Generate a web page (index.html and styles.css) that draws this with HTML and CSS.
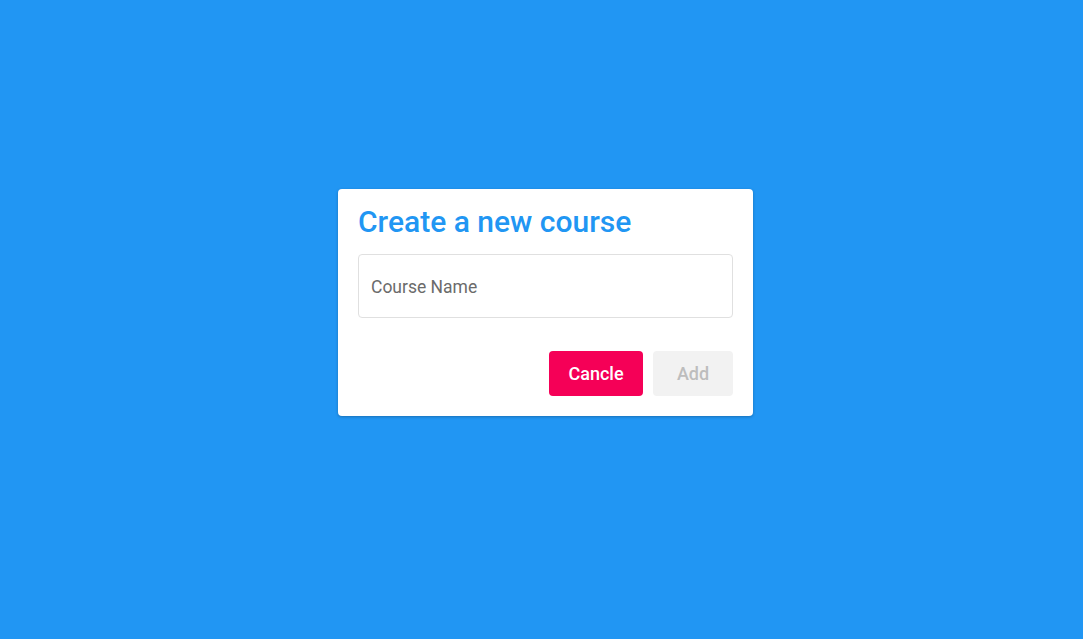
FILE: index.html
```html
<!DOCTYPE html>
<html lang="en">
<head>
<meta charset="utf-8">
<title>Create a new course</title>
<link rel="stylesheet" href="styles.css">
</head>
<body>
<div class="page">
  <div class="dialog">
    <h1 class="dialog-title">Create a new course</h1>
    <input class="course-input" type="text" placeholder="Course Name">
    <div class="actions">
      <button class="btn btn-cancel" type="button">Cancle</button>
      <button class="btn btn-add" type="button" disabled>Add</button>
    </div>
  </div>
</div>
</body>
</html>
```

FILE: styles.css
```css
html, body {
  margin: 0;
  padding: 0;
  height: 100%;
}
body {
  background: #2196f3;
  font-family: Roboto, "Liberation Sans", sans-serif;
}
.page {
  height: 100%;
  display: flex;
  justify-content: center;
  align-items: center;
}
.dialog {
  width: 415px;
  box-sizing: border-box;
  background: #fff;
  border-radius: 4px;
  padding: 14px 20px 20px;
  display: flex;
  flex-direction: column;
  box-shadow: 0 1px 3px rgba(0,0,0,0.25);
  margin: -35px 0 0 8px;
}
.dialog-title {
  margin: 0;
  font-size: 30px;
  font-weight: 500;
  color: #2196f3;
  line-height: 37px;
}
.course-input {
  margin-top: 14px;
  height: 64px;
  box-sizing: border-box;
  border: 1px solid #e0e0e0;
  border-radius: 4px;
  padding: 2px 12px 0;
  font-family: Roboto, "Liberation Sans", sans-serif;
  font-size: 17.5px;
  color: #333;
  outline: none;
}
.course-input::placeholder {
  color: #6b6b6b;
}
.actions {
  margin-top: 33px;
  display: flex;
  justify-content: flex-end;
  gap: 10px;
}
.btn {
  height: 45px;
  border: none;
  border-radius: 4px;
  font-family: Roboto, "Liberation Sans", sans-serif;
  font-size: 18px;
  font-weight: 500;
  padding: 0;
}
.btn-cancel {
  width: 94px;
  background: #f50057;
  color: #fff;
}
.btn-add {
  width: 80px;
  background: #f2f2f2;
  color: #bdbdbd;
}
```
